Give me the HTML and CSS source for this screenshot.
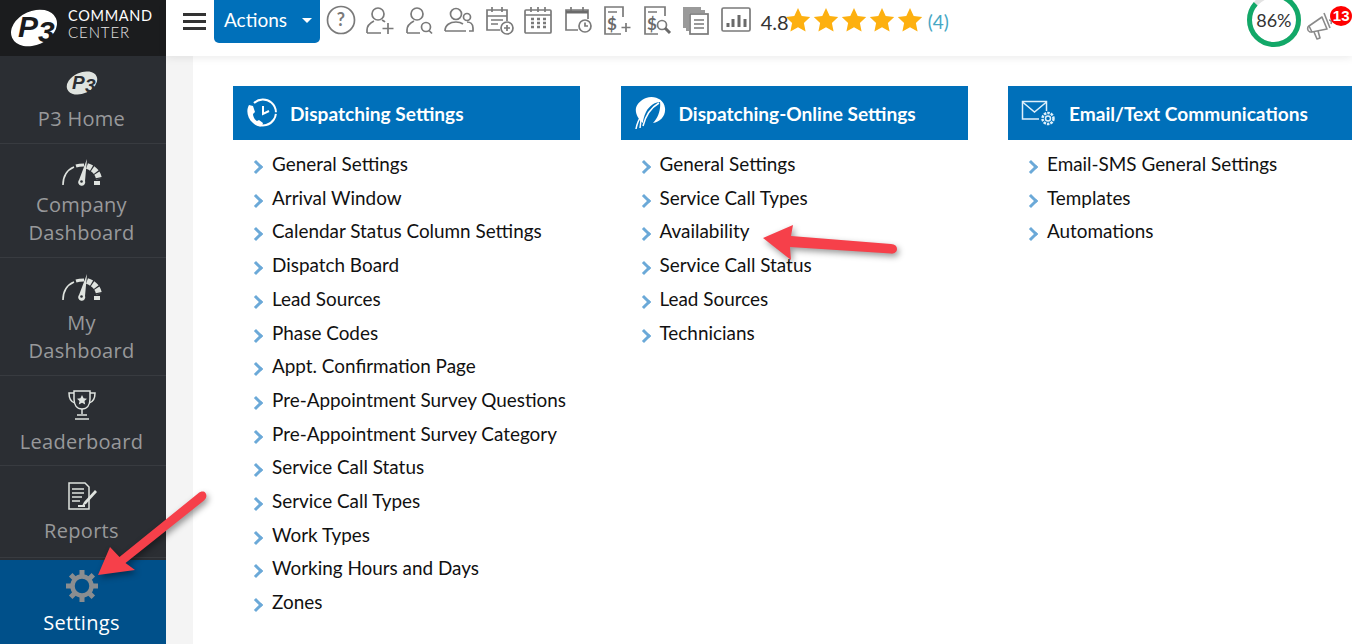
FILE: index.html
```html
<!DOCTYPE html>
<html lang="en">
<head>
<meta charset="utf-8">
<title>Settings</title>
<link rel="stylesheet" href="styles.css">
</head>
<body>
<div class="app">
  <aside class="sidebar">
    <div class="brand">
      <svg class="brand-mark" width="50" height="44" viewBox="0 0 50 44"><ellipse cx="25" cy="22" rx="24" ry="17" transform="rotate(-24 25 22)" fill="#fff"/><text x="9" y="31" class="mark-text">P<tspan dy="5">3</tspan></text></svg>
      <div class="brand-text"><span class="brand-top">COMMAND</span><span class="brand-bottom">CENTER</span></div>
    </div>
    <a class="nav-item nav-home">
      <svg class="nav-icon" width="34" height="28" viewBox="0 0 34 28"><ellipse cx="17" cy="14" rx="16" ry="10.500" transform="rotate(-24 17 14)" fill="#dfe3df"/><text x="7" y="20" class="mark-text small">P<tspan dy="3">3</tspan></text></svg>
      <span>P3 Home</span>
    </a>
    <a class="nav-item nav-company">
      <svg class="nav-icon" width="42" height="28" viewBox="0 0 42 28"><g fill="none" stroke="#dfe3df"><path d="M2 27C2 18 6 12 13 9" stroke-width="1.600"/><path d="M15 8c3-1 5-1 8-1" stroke-width="3"/><path d="M26 8c6 2 11 6 12 13" stroke-width="6" stroke-dasharray="5 1.200"/><path d="M33 23h6v4h-6z" fill="#dfe3df" stroke="none"/></g><path d="M26 1l-8 21a3.500 3.500 0 1 0 6 1z" fill="#dfe3df"/><circle cx="20.500" cy="23.500" r="1.300" fill="#2b2e33"/></svg>
      <span>Company<br>Dashboard</span>
    </a>
    <a class="nav-item nav-my">
      <svg class="nav-icon" width="42" height="28" viewBox="0 0 42 28"><g fill="none" stroke="#dfe3df"><path d="M2 27C2 18 6 12 13 9" stroke-width="1.600"/><path d="M15 8c3-1 5-1 8-1" stroke-width="3"/><path d="M26 8c6 2 11 6 12 13" stroke-width="6" stroke-dasharray="5 1.200"/><path d="M33 23h6v4h-6z" fill="#dfe3df" stroke="none"/></g><path d="M26 1l-8 21a3.500 3.500 0 1 0 6 1z" fill="#dfe3df"/><circle cx="20.500" cy="23.500" r="1.300" fill="#2b2e33"/></svg>
      <span>My<br>Dashboard</span>
    </a>
    <a class="nav-item nav-leader">
      <svg class="nav-icon" width="28" height="32" viewBox="0 0 28 32"><g fill="none" stroke="#dfe3df" stroke-width="1.500"><path d="M6 2h16v8c0 6-3 10-8 10s-8-4-8-10z"/><path d="M6 4H1c0 6 2 9 6 10M22 4h5c0 6-2 9-6 10"/><path d="M14 20v5M9 26h10M7 30h14"/></g><path d="M14 6l1.600 3.300 3.400.400-2.500 2.400.700 3.400-3.200-1.700-3.200 1.700.700-3.400-2.500-2.400 3.400-.400z" fill="#dfe3df"/></svg>
      <span>Leaderboard</span>
    </a>
    <a class="nav-item nav-reports">
      <svg class="nav-icon" width="30" height="30" viewBox="0 0 30 30"><g fill="none" stroke="#dfe3df" stroke-width="1.500"><path d="M2 2h16l4 4v22H2z"/><path d="M5 8h12M5 12h12M5 16h10M5 20h8"/></g><path d="M28 9l2 2-11 12-4 2 2-4z" fill="#dfe3df"/><path d="M11 24h7v2h-7z" fill="#dfe3df"/></svg>
      <span>Reports</span>
    </a>
    <a class="nav-item nav-settings">
      <svg class="nav-icon" width="34" height="34" viewBox="0 0 34 34"><circle cx="17" cy="17" r="9.500" fill="none" stroke="#8a8d90" stroke-width="4.500"/><g stroke="#8a8d90" stroke-width="5"><path d="M17 1v6M17 27v6M1 17h6M27 17h6M5.700 5.700l4.200 4.200M24.100 24.100l4.200 4.200M5.700 28.300l4.200-4.200M24.100 9.900l4.200-4.200"/></g></svg>
      <span>Settings</span>
    </a>
  </aside>

  <div class="workspace">
    <header class="topbar">
      <div class="hamburger"><i></i><i></i><i></i></div>
      <button class="actions">Actions<span class="caret"></span></button>
      <div class="tools">
        <div class="tool"><svg width="30" height="30" viewBox="0 0 30 30"><circle cx="15" cy="15" r="13.500"/><text x="15" y="21" class="qmark">?</text></svg></div>
        <div class="tool"><svg width="30" height="30" viewBox="0 0 30 30"><circle cx="13" cy="9" r="6"/><path d="M2 28v-3c0-5 3-7 7-9M17 15c1 .5 2 1 3 2M2 28h14M23 18v11M17.500 23.500h11"/></svg></div>
        <div class="tool"><svg width="30" height="30" viewBox="0 0 30 30"><circle cx="12" cy="9" r="6"/><path d="M2 28v-3c0-5 3-7 7-9M2 28h13"/><circle cx="21" cy="22" r="4.500"/><path d="M24 25.500l3 3"/></svg></div>
        <div class="tool"><svg width="30" height="30" viewBox="0 0 30 30"><circle cx="12" cy="9" r="5.500"/><path d="M1 26c0-6 5-9 11-9 3 0 5 .5 7 2M1 26h21"/><circle cx="23" cy="12" r="3.500"/><path d="M23 17c3 0 6 2 6 6v3h-4"/></svg></div>
        <div class="tool"><svg width="30" height="30" viewBox="0 0 30 30"><path d="M16 25H3V5h20v11M3 11h20M8 2v5M18 2v5M7 15h12M7 19h7"/><circle cx="23" cy="23" r="6"/><path d="M23 20v6M20 23h6"/></svg></div>
        <div class="tool"><svg width="30" height="30" viewBox="0 0 30 30"><rect x="2" y="5" width="26" height="23" rx="1"/><path d="M2 10h26M8 2v5M15 2v5M22 2v5"/><path class="dots" d="M8 14h3M14 14h3M20 14h3M8 18h3M14 18h3M20 18h3M8 22h3M14 22h3M20 22h3"/></svg></div>
        <div class="tool"><svg width="30" height="30" viewBox="0 0 30 30"><path d="M15 25H3V5h22v9M8 2v6M20 2v6"/><path class="thick" d="M3 7h22"/><circle cx="22" cy="21" r="6"/><path d="M22 17.500V21h3"/></svg></div>
        <div class="tool"><svg width="30" height="30" viewBox="0 0 30 30"><path d="M19 29H3V2h18v10M6 7h9"/><text x="5" y="25" class="glyph">$</text><path d="M24 18v9M19.500 22.500h9"/></svg></div>
        <div class="tool"><svg width="30" height="30" viewBox="0 0 30 30"><path d="M16 29H3V2h20v9M6 7h9"/><text x="5" y="25" class="glyph">$</text><circle cx="20" cy="20" r="4.500"/><path class="thick" d="M23 23l5 5"/></svg></div>
        <div class="tool"><svg width="30" height="30" viewBox="0 0 30 30"><path class="shade" d="M2 2h18v3H5v18H2z"/><path class="shade" d="M5 5h19v3H8v18H5z"/><rect x="9" y="9" width="18" height="20"/><path d="M13 15h10M13 19h10M13 23h10"/></svg></div>
        <div class="tool"><svg width="30" height="30" viewBox="0 0 30 30"><rect x="1" y="3" width="28" height="23" rx="1.500"/><path class="thick" d="M7 22v-4M12 22v-8M18 22v-12M24 22v-8"/></svg></div>
      </div>
      <div class="rating">
        <span class="score">4.8</span>
        <div class="stars">
          <svg width="28" height="28" viewBox="0 0 28 28"><path d="M14 2l3.700 7.900 8.500 1.100-6.300 5.900 1.700 8.600L14 21.300l-7.600 4.200 1.700-8.600L1.800 11l8.500-1.100z"/></svg>
          <svg width="28" height="28" viewBox="0 0 28 28"><path d="M14 2l3.700 7.900 8.500 1.100-6.300 5.900 1.700 8.600L14 21.300l-7.600 4.200 1.700-8.600L1.800 11l8.500-1.100z"/></svg>
          <svg width="28" height="28" viewBox="0 0 28 28"><path d="M14 2l3.700 7.900 8.500 1.100-6.300 5.900 1.700 8.600L14 21.300l-7.600 4.200 1.700-8.600L1.800 11l8.500-1.100z"/></svg>
          <svg width="28" height="28" viewBox="0 0 28 28"><path d="M14 2l3.700 7.900 8.500 1.100-6.300 5.900 1.700 8.600L14 21.300l-7.600 4.200 1.700-8.600L1.800 11l8.500-1.100z"/></svg>
          <svg width="28" height="28" viewBox="0 0 28 28"><path d="M14 2l3.700 7.900 8.500 1.100-6.300 5.900 1.700 8.600L14 21.300l-7.600 4.200 1.700-8.600L1.800 11l8.500-1.100z"/></svg>
        </div>
        <span class="count">(4)</span>
      </div>
      <div class="status">
        <div class="ring">
          <svg width="56" height="56" viewBox="0 0 56 56"><circle cx="28" cy="28" r="24.500" fill="none" stroke="#e2e2e2" stroke-width="5"/><circle cx="28" cy="28" r="24.500" fill="none" stroke="#12a868" stroke-width="5" stroke-dasharray="132.400 153.900" transform="rotate(-90 28 28)"/></svg>
          <span>86%</span>
        </div>
        <svg class="bell" width="28" height="28" viewBox="0 0 28 28"><g fill="none" stroke="#8a8a8a" stroke-width="1.600" stroke-linejoin="round"><path d="M3 14l13-9 5 12-15 3z"/><path d="M3 14c-2 1-2 5 1 6h2"/><path d="M8 20l3 7 3-1-2-7"/><path d="M18 1l6 15"/><path d="M23 8c2 0 3 2 2 4"/></g></svg>
        <span class="badge">13</span>
      </div>
    </header>

    <main class="content">
      <section class="panel">
        <h2 class="panel-head">
          <svg class="head-icon" width="32" height="32" viewBox="0 0 32 32"><g fill="none" stroke="#fff" stroke-width="2"><path d="M8 6a13 13 0 1 1 3 21" stroke-dasharray="30 1.500"/><path d="M17 9v8l6-3"/></g><path d="M3 8c-3 5-2 13 4 18 3 3 7 4 9 3l1-3-4-3-2 1c-2-1-4-4-4-7l2-2-2-6z" fill="#fff"/></svg>
          <span>Dispatching Settings</span>
        </h2>
        <ul class="links">
          <li>General Settings</li>
          <li>Arrival Window</li>
          <li>Calendar Status Column Settings</li>
          <li>Dispatch Board</li>
          <li>Lead Sources</li>
          <li>Phase Codes</li>
          <li>Appt. Confirmation Page</li>
          <li>Pre-Appointment Survey Questions</li>
          <li>Pre-Appointment Survey Category</li>
          <li>Service Call Status</li>
          <li>Service Call Types</li>
          <li>Work Types</li>
          <li>Working Hours and Days</li>
          <li>Zones</li>
        </ul>
      </section>
      <section class="panel">
        <h2 class="panel-head">
          <svg class="head-icon" width="32" height="34" viewBox="0 0 32 34"><path d="M12 2c8-3 18 1 19 10 1 8-5 14-12 15 5-5 8-13 7-21-5 0-11 4-14 10-2 4-3 8-3 11C4 23 1 17 2 12c1-4 5-8 10-10z" fill="#fff"/><path d="M25 7C18 11 12 18 9 30M2 33c1-6 3-10 6-14M7 24l-1 8" fill="none" stroke="#fff" stroke-width="1.500"/></svg>
          <span>Dispatching-Online Settings</span>
        </h2>
        <ul class="links">
          <li>General Settings</li>
          <li>Service Call Types</li>
          <li>Availability</li>
          <li>Service Call Status</li>
          <li>Lead Sources</li>
          <li>Technicians</li>
        </ul>
      </section>
      <section class="panel">
        <h2 class="panel-head">
          <svg class="head-icon mail" width="36" height="26" viewBox="0 0 36 26"><g fill="none" stroke="#dff0fb" stroke-width="1.500"><path d="M18 19H1.500V1.500h24V11"/><path d="M1.500 2L13.500 12 25.500 2"/><circle cx="27" cy="18.500" r="5.500" stroke-width="2.500" stroke-dasharray="2.500 1"/><circle cx="27" cy="18.500" r="2.500"/></g></svg>
          <span>Email/Text Communications</span>
        </h2>
        <ul class="links">
          <li>Email-SMS General Settings</li>
          <li>Templates</li>
          <li>Automations</li>
        </ul>
      </section>
    </main>
  </div>
</div>

<svg class="callout callout-settings" width="130" height="100" viewBox="0 0 130 100"><path class="arrow-shape" d="M4 85L16 57l9.500 10L104 3.500c3-2.500 6-2.500 7.500-.5s1.200 5-1.500 7.500L31.500 73 41 80z"/></svg>
<svg class="callout callout-avail" width="150" height="50" viewBox="0 0 150 50"><path class="arrow-shape" d="M3 19L33 6l-2 11 100 8c4 .4 6 2 6 5 0 3-3 5-6 4.600L30 28l1 13z"/></svg>
</body>
</html>
```
FILE: styles.css
```css
* { box-sizing: border-box; }
html, body { margin: 0; height: 100%; overflow: hidden; background: #fff; }
body { font-family: "Lato", sans-serif; color: #111; position: relative; }
.app { display: flex; width: 1352px; height: 644px; }

.sidebar { width: 166px; flex: none; background: #2b2e33; display: flex; flex-direction: column; font-family: "Open Sans", sans-serif; }
.brand { height: 56px; background: #1b1c1e; display: flex; align-items: center; padding-left: 9px; gap: 9px; flex: none; }
.brand-mark { flex: none; }
.mark-text { font-family: "Liberation Sans", sans-serif; font-size: 30px; font-weight: 700; font-style: italic; fill: #1b1c1e; }
.mark-text.small { font-size: 19px; fill: #2b2e33; }
.brand-text { display: flex; flex-direction: column; color: #fff; line-height: 16px; margin-top: -8px; }
.brand-top { font-size: 14.500px; letter-spacing: .7px; font-family: "Lato", sans-serif; }
.brand-bottom { font-size: 15px; letter-spacing: .9px; font-family: "Lato", sans-serif; font-weight: 300; color: #e6e6e6; }

.nav-item { display: flex; flex-direction: column; align-items: center; text-align: center; color: #98999b; font-size: 20px; line-height: 28px; letter-spacing: .3px; border-bottom: 1px solid #383b40; flex: none; padding-right: 3px; }
.nav-icon { display: block; flex: none; }
.nav-home { height: 88px; padding-top: 13px; }
.nav-home .nav-icon { margin-bottom: 8px; }
.nav-company { height: 114px; padding-top: 14px; }
.nav-my { height: 118px; padding-top: 15px; }
.nav-company .nav-icon { margin-bottom: 5px; }
.nav-my .nav-icon { margin-bottom: 8px; }
.nav-leader { height: 90px; padding-top: 13px; }
.nav-leader .nav-icon { margin-bottom: 7px; }
.nav-reports { height: 92px; padding-top: 15px; margin-bottom: 2px; }
.nav-reports .nav-icon { margin-bottom: 6px; }
.nav-settings { flex: 1; background: #00508a; color: #fff; padding-top: 9px; border-bottom: 0; }
.nav-settings .nav-icon { margin-bottom: 6px; }

.workspace { flex: 1; min-width: 0; display: flex; flex-direction: column; }
.topbar { height: 56px; flex: none; background: #fff; display: flex; align-items: flex-start; box-shadow: 0 2px 8px rgba(0,0,0,.08); position: relative; z-index: 1; overflow: hidden; padding-left: 17px; }
.hamburger { width: 23px; height: 17px; margin-top: 13px; display: flex; flex-direction: column; justify-content: space-between; flex: none; }
.hamburger i { display: block; height: 3px; background: #333; }
.actions { width: 106px; height: 43px; margin-left: 8px; flex: none; background: #0070ba; border: 0; border-radius: 0 0 5px 5px; color: #fff; font-family: "Lato", sans-serif; font-size: 19px; display: flex; align-items: center; padding: 0 0 5px 10px; }
.caret { width: 0; height: 0; border: 5px solid transparent; border-top-color: #fff; border-bottom: 0; margin-left: 15px; margin-top: 3px; }
.tools { display: flex; margin-left: 1.200px; flex: none; }
.tool { width: 39.500px; height: 40px; display: flex; justify-content: center; padding-top: 5px; }
.tool svg { fill: none; stroke: #7a7a7a; stroke-width: 1.700; }
.tool .thick { stroke-width: 3; stroke: #6a6a6a; }
.tool .dots { stroke-width: 2.400; }
.tool .shade { fill: #9a9a9a; stroke: none; }
.qmark { font: 700 18px "Lato", sans-serif; text-anchor: middle; fill: #7a7a7a; stroke: none; }
.glyph { font: 700 17px "Lato", sans-serif; fill: #6a6a6a; stroke: none; }

.rating { display: flex; align-items: center; height: 40px; margin-left: 5px; flex: none; padding-top: 3px; }
.score { font-size: 20px; color: #333; width: 24px; }
.stars { display: flex; margin-top: -3px; margin-left: -1px; }
.stars svg { fill: #fdb010; }
.count { font-size: 19px; color: #47a7c4; margin-left: 4px; }

.status { position: relative; margin-left: 297px; flex: none; width: 105px; height: 56px; }
.ring { position: absolute; left: 0; top: -8px; width: 56px; height: 56px; display: flex; align-items: center; justify-content: center; }
.ring svg { position: absolute; left: 0; top: 0; }
.ring span { font-size: 18px; color: #333; position: relative; }
.bell { position: absolute; left: 60px; top: 12px; }
.badge { position: absolute; left: 84px; top: 6px; width: 22px; height: 20px; border-radius: 50%; background: #f00; color: #fff; font: 700 15px/20px "Liberation Sans", sans-serif; padding-left: 3px; }

.content { flex: 1; min-height: 0; margin-left: 27px; padding: 30px 0 0 40px; display: grid; grid-template-columns: repeat(3, 347px); column-gap: 40.500px; background: #fff; box-shadow: -27px 0 0 #f4f4f4; align-items: start; }
.panel { min-width: 0; }
.panel-head { margin: 0; height: 54px; background: #0070ba; color: #fff; display: flex; align-items: center; font-size: 19.100px; font-weight: 700; padding-left: 13px; }
.head-icon { flex: none; margin-right: 12px; }
.panel:nth-child(2) .head-icon { margin-right: 13px; }
.links { list-style: none; margin: 7px 0 0; padding: 0 0 0 39px; font-size: 18.900px; line-height: 33.700px; color: #111; }
.links li { position: relative; white-space: nowrap; }
.links li::before { content: ""; position: absolute; left: -21px; top: 15px; width: 7px; height: 7px; border-top: 3px solid #6ba9d8; border-right: 3px solid #6ba9d8; transform: rotate(45deg); }

.callout { position: absolute; z-index: 5; overflow: visible; filter: drop-shadow(2px 3px 3px rgba(0,0,0,.4)); }
.callout-settings { left: 94px; top: 490px; }
.callout-avail { left: 760px; top: 219px; }
.arrow-shape { fill: #f6404a; }
```
